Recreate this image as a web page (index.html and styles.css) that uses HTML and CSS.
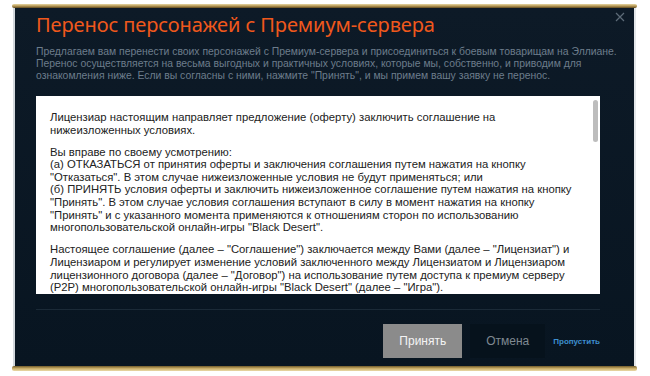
FILE: index.html
```html
<!DOCTYPE html>
<html lang="ru">
<head>
    <meta charset="UTF-8">
    <meta name="viewport" content="width=device-width, initial-scale=1.0">
    <title>Перенос персонажей</title>
    <link rel="stylesheet" href="styles.css">
</head>
<body>
    <div class="dialog">
        <div class="gold-bar gold-top"></div>
        <div class="panel">
            <button class="close" aria-label="Закрыть">
                <svg width="10" height="10" viewBox="0 0 10 10"><path d="M1 1L9 9M9 1L1 9" stroke="#5d6b78" stroke-width="1.2" fill="none"/></svg>
            </button>

            <h1 class="title">Перенос персонажей с Премиум-сервера</h1>
            <p class="intro">
                Предлагаем вам перенести своих персонажей с Премиум-сервера и присоединиться к боевым товарищам на Эллиане.<br>
                Перенос осуществляется на весьма выгодных и практичных условиях, которые мы, собственно, и приводим для<br>
                ознакомления ниже. Если вы согласны с ними, нажмите "Принять", и мы примем вашу заявку не перенос.
            </p>

            <div class="terms">
                <div class="terms-text">
                    <p>Лицензиар настоящим направляет предложение (оферту) заключить соглашение на<br>нижеизложенных условиях.</p>
                    <p>Вы вправе по своему усмотрению:<br>
                    (а) ОТКАЗАТЬСЯ от принятия оферты и заключения соглашения путем нажатия на кнопку<br>
                    "Отказаться". В этом случае нижеизложенные условия не будут применяться; или<br>
                    (б) ПРИНЯТЬ условия оферты и заключить нижеизложенное соглашение путем нажатия на кнопку<br>
                    "Принять". В этом случае условия соглашения вступают в силу в момент нажатия на кнопку<br>
                    "Принять" и с указанного момента применяются к отношениям сторон по использованию<br>
                    многопользовательской онлайн-игры "Black Desert".</p>
                    <p>Настоящее соглашение (далее – "Соглашение") заключается между Вами (далее – "Лицензиат") и<br>
                    Лицензиаром и регулирует изменение условий заключенного между Лицензиатом и Лицензиаром<br>
                    лицензионного договора (далее – "Договор") на использование путем доступа к премиум серверу<br>
                    (P2P) многопользовательской онлайн-игры "Black Desert" (далее – "Игра").</p>
                </div>
                <div class="scrollbar"></div>
            </div>

            <div class="footer">
                <button class="btn btn-accept">Принять</button>
                <button class="btn btn-cancel">Отмена</button>
                <a class="skip" href="#">Пропустить</a>
            </div>
        </div>
        <div class="gold-bar gold-bottom"></div>
    </div>
</body>
</html>
```

FILE: styles.css
```css
* {
    margin: 0;
    padding: 0;
    box-sizing: border-box;
}

body {
    background: #ffffff;
    font-family: 'Liberation Sans', Arial, sans-serif;
}

.dialog {
    width: 625px;
    margin: 4px 0 0 12px;
    display: flex;
    flex-direction: column;
}

.gold-bar {
    height: 4px;
    background: linear-gradient(to bottom, #e6d6a4, #b99a55 50%, #5e4a22);
    border-radius: 2px;
}

.gold-bottom {
    height: 5px;
    background: linear-gradient(to bottom, #6f5a2a, #c9ad68 50%, #ead9a8);
}

.panel {
    position: relative;
    height: 358px;
    margin: 0 1px;
    background: linear-gradient(to bottom, #0d1a27, #081521);
    border-left: 2px solid #d3d8dc;
    border-right: 2px solid #e4e7ea;
    padding: 0 34px 0 21px;
    display: flex;
    flex-direction: column;
}

.close {
    position: absolute;
    top: 4px;
    right: 9px;
    background: none;
    border: none;
    line-height: 0;
}

.title {
    font-family: 'Noto Sans', 'Liberation Sans', sans-serif;
    font-weight: normal;
    font-size: 20px;
    line-height: 26px;
    color: #f0581c;
    margin-top: 4px;
    letter-spacing: -0.1px;
}

.intro {
    margin-top: 8px;
    font-size: 10.4px;
    line-height: 12px;
    color: #6d7d8c;
    white-space: nowrap;
}

.terms {
    position: relative;
    margin-top: 14px;
    height: 198px;
    background: #ffffff;
    overflow: hidden;
}

.terms-text {
    padding: 15px 20px 0 14px;
    font-size: 11.3px;
    line-height: 12.6px;
    color: #222222;
    white-space: nowrap;
}

.terms-text p {
    margin-bottom: 9.5px;
}

.scrollbar {
    position: absolute;
    top: 4px;
    right: 2px;
    width: 5px;
    height: 42px;
    border-radius: 3px;
    background: #bdbdbd;
}

.footer {
    margin-top: 15px;
    border-top: 1px solid #1b2a37;
    padding-top: 14px;
    display: flex;
    justify-content: flex-end;
    align-items: center;
    gap: 8px;
}

.btn {
    height: 34px;
    border: none;
    font-family: 'Liberation Sans', Arial, sans-serif;
    font-size: 12px;
}

.btn-accept {
    width: 79px;
    background: #8b8b8b;
    color: #f4f4f4;
}

.btn-cancel {
    width: 75px;
    background: #06121c;
    color: #7f8991;
}

.skip {
    font-size: 8px;
    font-weight: bold;
    color: #3e8fcf;
    text-decoration: none;
}
```
